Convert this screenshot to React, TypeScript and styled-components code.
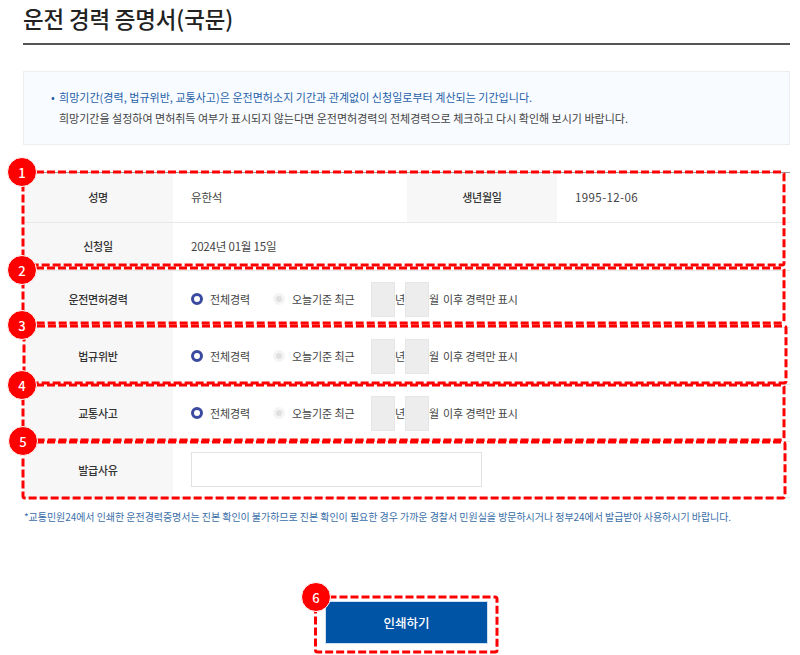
import React from 'react';
import styled, { createGlobalStyle } from 'styled-components';

const GlobalStyle = createGlobalStyle`
  html, body {
    margin: 0;
    padding: 0;
    background: #fff;
  }
  body {
    font-family: 'Noto Sans CJK KR', 'Noto Sans', sans-serif;
    color: #333;
  }
`;

const Page = styled.div`
  position: relative;
  width: 800px;
  height: 655px;
  padding: 0 10px 0 23px;
  box-sizing: border-box;
  overflow: hidden;
`;

const Title = styled.h1`
  margin: 0;
  height: 45px;
  box-sizing: border-box;
  padding-top: 1px;
  border-bottom: 2px solid #555;
  font-size: 22.4px;
  line-height: 34px;
  font-weight: 500;
  letter-spacing: -0.1px;
  color: #222;
`;

const Notice = styled.div`
  margin-top: 26px;
  height: 74px;
  box-sizing: border-box;
  padding: 15px 0 0 35px;
  background: #f8fbff;
  border: 1px solid #eceef1;
  font-size: 11px;
  line-height: 21px;
`;

const NoticeLine = styled.div<{ $blue?: boolean }>`
  position: relative;
  letter-spacing: ${(p) => (p.$blue ? '0.03px' : '0')};
  color: ${(p) => (p.$blue ? '#1f5fa8' : '#444')};
`;

const Bullet = styled.span`
  position: absolute;
  left: -8px;
  color: #1f5fa8;
`;

const Table = styled.div`
  margin-top: 27px;
  border-top: 1px solid #999;
`;

const Row = styled.div<{ $height: number; $lift?: boolean }>`
  display: flex;
  height: ${(p) => p.$height}px;
  box-sizing: border-box;
  border-bottom: 1px solid #e8e8e8;
  ${(p) => (p.$lift ? '& > * { padding-bottom: 2px; }' : '')}
`;

const Label = styled.div`
  display: flex;
  align-items: center;
  justify-content: center;
  width: 150px;
  flex-shrink: 0;
  background: #f7f7f7;
  font-size: 11px;
  font-weight: 500;
  letter-spacing: -0.25px;
  color: #333;
`;

const Value = styled.div<{ $width?: number; $wide?: boolean }>`
  display: flex;
  align-items: center;
  padding-left: 18px;
  box-sizing: border-box;
  ${(p) => (p.$width ? `width: ${p.$width}px;` : 'flex: 1;')}
  font-size: 11.5px;
  letter-spacing: ${(p) => (p.$wide ? '0.4px' : '-0.2px')};
  color: #444;
`;

const Radio = styled.span<{ $on?: boolean }>`
  width: 12px;
  height: 12px;
  box-sizing: border-box;
  border-radius: 50%;
  flex-shrink: 0;
  border: ${(p) => (p.$on ? '3px solid #3a4a9f' : '3px solid #f4f4f4')};
  background: ${(p) => (p.$on ? '#fff' : '#e0e0e0')};
`;

const RadioText = styled.span<{ $width: number }>`
  width: ${(p) => p.$width}px;
  margin-left: 7px;
  font-size: 11px;
  letter-spacing: -0.1px;
  white-space: nowrap;
  color: #444;
`;

const SmallInput = styled.span`
  width: 24px;
  height: 35px;
  box-sizing: border-box;
  flex-shrink: 0;
  background: #ededed;
  border: 1px solid #e6e6e6;
`;

const Unit = styled.span`
  width: 10px;
  font-size: 11px;
  text-align: center;
  color: #444;
`;

const Suffix = styled.span`
  margin-left: 4px;
  font-size: 11px;
  letter-spacing: -0.1px;
  white-space: nowrap;
  color: #444;
`;

const TextInput = styled.span`
  width: 291px;
  height: 35px;
  box-sizing: border-box;
  background: #fff;
  border: 1px solid #e2e2e2;
`;

const Footnote = styled.p`
  margin: 11px 0 0 1px;
  font-size: 10px;
  line-height: 16px;
  letter-spacing: -0.05px;
  white-space: nowrap;
  color: #3a6ea8;
`;

const Actions = styled.div`
  display: flex;
  justify-content: center;
  margin-top: 76px;
`;

const PrintButton = styled.button`
  width: 163px;
  height: 43px;
  padding: 0;
  background: #0054a6;
  border: 1px solid #cfe0f2;
  color: #fff;
  font-family: inherit;
  font-size: 12.5px;
  font-weight: 500;
`;

const DashBox = styled.svg`
  position: absolute;
  left: 0;
  top: 0;
  pointer-events: none;
`;

const Badge = styled.span<{ $x: number; $y: number }>`
  position: absolute;
  left: ${(p) => p.$x - 15}px;
  top: ${(p) => p.$y - 15}px;
  display: flex;
  align-items: center;
  justify-content: center;
  width: 30px;
  height: 30px;
  box-sizing: border-box;
  border: 1px solid #fff;
  border-radius: 50%;
  background: #fe0000;
  color: #fff;
  font-size: 13px;
  font-weight: 500;
`;

const marks = [
  { n: 1, x: 23, y: 172, w: 761, h: 93, bx: 22, by: 172 },
  { n: 2, x: 23, y: 268, w: 761, h: 55, bx: 22, by: 270 },
  { n: 3, x: 24, y: 326, w: 762, h: 57, bx: 22, by: 325 },
  { n: 4, x: 23, y: 385, w: 761, h: 55, bx: 22, by: 385 },
  { n: 5, x: 23, y: 442, w: 762, h: 56, bx: 23, by: 441 },
  { n: 6, x: 315.5, y: 597, w: 181.5, h: 55, bx: 316, by: 597 },
];

const RangeValue = () => (
  <Value>
    <Radio $on />
    <RadioText $width={63}>전체경력</RadioText>
    <Radio />
    <RadioText $width={79}>오늘기준 최근</RadioText>
    <SmallInput />
    <Unit>년</Unit>
    <SmallInput />
    <Unit>월</Unit>
    <Suffix>이후 경력만 표시</Suffix>
  </Value>
);

const App = () => {
  return (
    <Page>
      <GlobalStyle />
      <Title>운전 경력 증명서(국문)</Title>
      <Notice>
        <NoticeLine $blue>
          <Bullet>•</Bullet>
          희망기간(경력, 법규위반, 교통사고)은 운전면허소지 기간과 관계없이 신청일로부터 계산되는 기간입니다.
        </NoticeLine>
        <NoticeLine>
          희망기간을 설정하여 면허취득 여부가 표시되지 않는다면 운전면허경력의 전체경력으로 체크하고 다시 확인해 보시기 바랍니다.
        </NoticeLine>
      </Notice>

      <Table>
        <Row $height={50} $lift>
          <Label>성명</Label>
          <Value $width={234}>유한석</Value>
          <Label>생년월일</Label>
          <Value $wide>1995-12-06</Value>
        </Row>
        <Row $height={48} $lift>
          <Label>신청일</Label>
          <Value>2024년 01월 15일</Value>
        </Row>
        <Row $height={57}>
          <Label>운전면허경력</Label>
          <RangeValue />
        </Row>
        <Row $height={57}>
          <Label>법규위반</Label>
          <RangeValue />
        </Row>
        <Row $height={57}>
          <Label>교통사고</Label>
          <RangeValue />
        </Row>
        <Row $height={56}>
          <Label>발급사유</Label>
          <Value>
            <TextInput />
          </Value>
        </Row>
      </Table>

      <Footnote>
        *교통민원24에서 인쇄한 운전경력증명서는 진본 확인이 불가하므로 진본 확인이 필요한 경우 가까운 경찰서 민원실을 방문하시거나 정부24에서 발급받아 사용하시기 바랍니다.
      </Footnote>

      <Actions>
        <PrintButton>인쇄하기</PrintButton>
      </Actions>

      <DashBox width="800" height="655">
        {marks.map((m) => (
          <rect
            key={m.n}
            x={m.x}
            y={m.y}
            width={m.w}
            height={m.h}
            rx="2"
            fill="none"
            stroke="#fe0000"
            strokeWidth="3"
            strokeDasharray="8 3"
          />
        ))}
      </DashBox>
      {marks.map((m) => (
        <Badge key={m.n} $x={m.bx} $y={m.by}>
          {m.n}
        </Badge>
      ))}
    </Page>
  );
};

export default App;
